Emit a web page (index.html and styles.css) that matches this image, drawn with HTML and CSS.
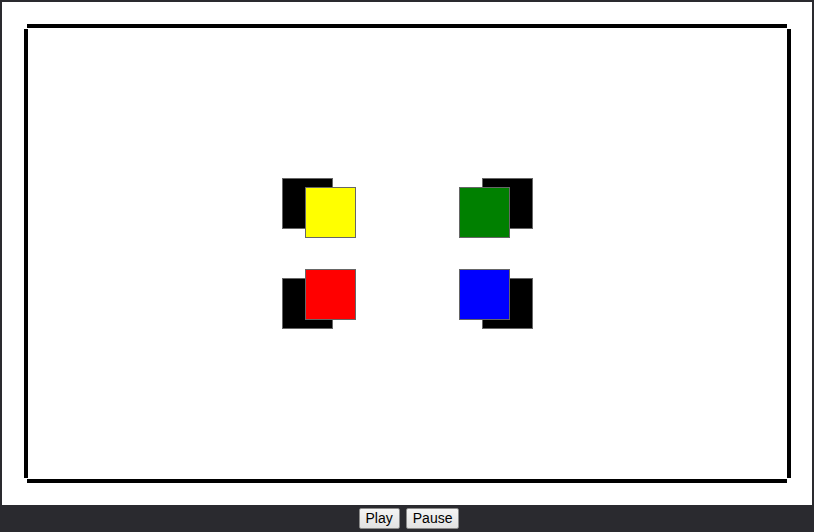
FILE: index.html
```html
<!DOCTYPE html>
<html>
<head>
<meta charset="utf-8">
<link rel="stylesheet" href="styles.css">
</head>
<body>
<div class="stage">
  <svg class="canvas" width="810" height="503" viewBox="0 0 810 503">
    <g fill="#000">
      <rect x="25" y="22" width="760" height="4"/>
      <rect x="22" y="27" width="4" height="449"/>
      <rect x="785" y="27" width="4" height="449"/>
      <rect x="25" y="477" width="760" height="4"/>
    </g>
    <g stroke="#666" stroke-width="1">
      <rect x="280.5" y="176.5" width="50" height="50" fill="#000"/>
      <rect x="303.5" y="185.5" width="50" height="50" fill="#ffff00"/>
      <rect x="480.5" y="176.5" width="50" height="50" fill="#000"/>
      <rect x="457.5" y="185.5" width="50" height="50" fill="#008000"/>
      <rect x="280.5" y="276.5" width="50" height="50" fill="#000"/>
      <rect x="303.5" y="267.5" width="50" height="50" fill="#ff0000"/>
      <rect x="480.5" y="276.5" width="50" height="50" fill="#000"/>
      <rect x="457.5" y="267.5" width="50" height="50" fill="#0000ff"/>
    </g>
  </svg>
</div>
<div class="controls">
  <button class="btn">Play</button>
  <button class="btn">Pause</button>
</div>
</body>
</html>
```
FILE: styles.css
```css
html, body {
  margin: 0;
  padding: 0;
}
body {
  background: #2a2a2f;
  padding: 2px 2px 0 2px;
  width: 810px;
  height: 530px;
  overflow: hidden;
}
.stage {
  width: 810px;
  height: 503px;
  background: #fff;
}
.canvas {
  display: block;
}
.controls {
  height: 27px;
  display: flex;
  align-items: center;
  justify-content: center;
  gap: 6px;
  padding-left: 4px;
}
.btn {
  font-family: "Liberation Sans", Arial, sans-serif;
  font-size: 14px;
  color: #000;
  background: linear-gradient(#f4f4f4, #e2e2e2);
  border: 1px solid #8a8a8a;
  border-radius: 2px;
  height: 21px;
  padding: 0 6px;
  line-height: 19px;
  margin: 0;
}
```
